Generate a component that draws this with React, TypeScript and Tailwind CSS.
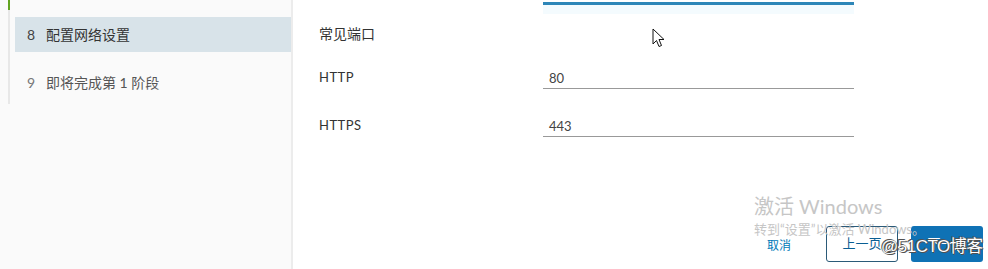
import React from 'react';

const cjk = "font-['Lato','Noto_Sans_CJK_SC',sans-serif]";

// --- sidebar step item ---
function Step({ num, label, active }: { num: number; label: string; active?: boolean }) {
    return (
        <div
            className={`flex items-center h-[35px] ml-[5px] pl-[12px] text-[14px] ${active ? 'bg-[#d8e3e9] text-[#333]' : 'text-[#565656]'}`}
        >
            <span className={`w-[19px] ${active ? 'text-[#444]' : 'text-[#777]'}`}>{num}</span>
            <span>{label}</span>
        </div>
    );
}

// --- underline input row ---
function PortRow({ label, value }: { label: string; value: string }) {
    return (
        <div className="flex items-end h-[48px]">
            <div className="w-[224px] pb-[2px] leading-[20px] text-[13px] text-[#333] tracking-[0.5px]">{label}</div>
            <div className="w-[311px] border-b border-[#999] pl-[6px] text-[13px] text-[#444] leading-[20px]">
                {value}
            </div>
        </div>
    );
}

export default function App() {
    return (
        <div className={`relative w-[988px] h-[269px] flex bg-white overflow-hidden ${cjk}`}>
            {/* Sidebar */}
            <div className="w-[293px] h-full bg-[#fafafa] border-r-2 border-[#ececec] flex pl-[8px]">
                <div className="flex flex-col w-[2px] h-[104px]">
                    <div className="h-[10px] bg-[#62a420]" />
                    <div className="flex-1 bg-[#e8e8e8]" />
                </div>
                <div className="flex-1 flex flex-col pt-[17px]">
                    <Step num={8} label="配置网络设置" active />
                    <div className="h-[13px]" />
                    <Step num={9} label="即将完成第 1 阶段" />
                </div>
            </div>

            {/* Main */}
            <div className="flex-1 flex flex-col pl-[26px]">
                <div className="flex">
                    <div className="w-[224px]" />
                    <div className="w-[311px] h-[12px] border-t-[3px] border-[#2d86b8] mt-[2px] bg-[#f4fbfe]" />
                </div>
                <div className="mt-[9px] text-[14px] text-[#333]">常见端口</div>
                <div className="mt-[-3px]">
                    <PortRow label="HTTP" value="80" />
                    <PortRow label="HTTPS" value="443" />
                </div>

                {/* footer buttons */}
                <div className="mt-auto mb-[7px] flex items-center justify-end pr-[5px]">
                    <button className="text-[12px] text-[#0079b8] mr-[35px] mt-[4px]">取消</button>
                    <button className="w-[72px] h-[36px] border border-[#2b5a78] rounded-[3px] text-[13px] text-[#0a5e93] bg-white mr-[13px]">上一页</button>
                    <button className="w-[72px] h-[36px] rounded-[3px] bg-[#0f72b5] text-[13px] text-white">下一页</button>
                </div>
            </div>

            {/* mouse cursor */}
            <svg className="absolute left-[652px] top-[28px]" width="13" height="20" viewBox="0 0 13 20">
                <path d="M1 1 L1 16 L4.5 12.5 L7 18.5 L9.5 17.5 L7 11.5 L12 11.5 Z" fill="white" stroke="#111" strokeWidth="1" strokeLinejoin="round" />
            </svg>

            {/* activation watermark */}
            <div className="absolute left-[754px] top-[193px] pointer-events-none text-[#c6c6c6]">
                <div className="text-[20px] leading-[26px]">激活 Windows</div>
                <div className="text-[13px] leading-[18px] mt-[1px]">转到“设置”以激活 Windows。</div>
            </div>

            {/* blog watermark */}
            <div
                className="absolute left-[881px] top-[235px] whitespace-nowrap text-[17px] tracking-[-0.5px] leading-[24px] text-white pointer-events-none font-['Liberation_Sans','Noto_Sans_CJK_SC',sans-serif]"
                style={{ textShadow: '0 0 1px #333, 1px 1px 0 #555, -1px -1px 0 #555' }}
            >
                @51CTO博客
            </div>
        </div>
    );
}
